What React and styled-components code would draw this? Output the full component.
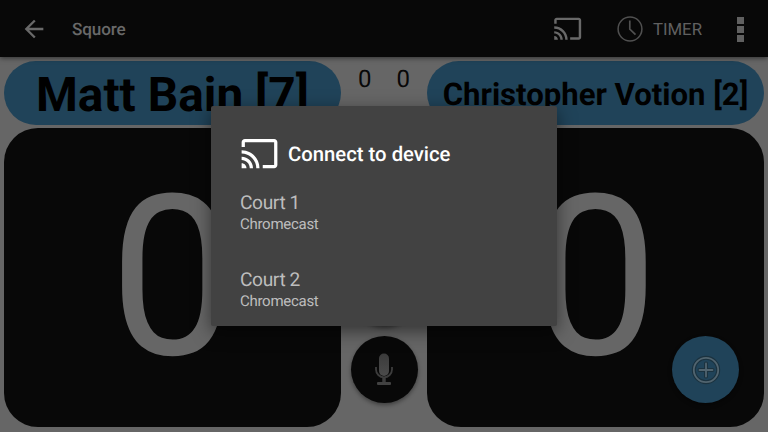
import React from "react";
import styled, { createGlobalStyle } from "styled-components";

const GlobalStyle = createGlobalStyle`
  *, *::before, *::after { box-sizing: border-box; }
  html, body { margin: 0; padding: 0; overflow: hidden; background: #666; }
  svg { display: block; flex: none; }
`;

const Screen = styled.div`
  position: relative;
  display: flex;
  flex-direction: column;
  width: 768px;
  height: 432px;
  overflow: hidden;
  background: #666;
  font-family: Roboto, "Liberation Sans", sans-serif;
  text-rendering: geometricPrecision;
`;

const AppBar = styled.header`
  position: relative;
  display: flex;
  align-items: center;
  flex: none;
  height: 57px;
  padding: 1px 24.5px 0 19.5px;
  background: #080808;
  color: #696969;
  box-shadow: 0 1px 5px rgba(0, 0, 0, 0.55);
`;

const AppTitle = styled.h1`
  flex: 1;
  margin: 0 0 0 24.5px;
  padding-top: 2px;
  font-size: 17.1px;
  line-height: 20px;
  font-weight: 500;
  letter-spacing: -0.1px;
`;

const TimerAction = styled.div`
  display: flex;
  align-items: center;
  gap: 10px;
  margin: 0 34.5px 0 35px;
  font-size: 16.8px;
  line-height: 20px;
  color: #606060;
`;

const TimerLabel = styled.span`
  padding-top: 2px;
`;

const OverflowMenu = styled.div`
  display: grid;
  gap: 2px;
`;

const OverflowDot = styled.span`
  width: 7px;
  height: 7px;
  background: #606060;
`;

const Board = styled.main`
  display: grid;
  grid-template-columns: 337px 86px 337px;
  flex: 1;
  padding: 4px 4px 5px;
`;

const Side = styled.section`
  display: flex;
  flex-direction: column;
  gap: 3px;
`;

const PlayerName = styled.div`
  display: flex;
  align-items: center;
  justify-content: center;
  height: 64px;
  padding-top: ${(p) => p.$drop}px;
  border-radius: 32px;
  background: #204359;
  color: #000;
  font-size: ${(p) => p.$size}px;
  font-weight: 700;
  line-height: 1;
  white-space: nowrap;
`;

const ScorePanel = styled.div`
  display: flex;
  align-items: center;
  justify-content: center;
  flex: 1;
  border-radius: 34px;
  background: #080808;
  color: #666;
  font-size: 224px;
  line-height: 1;
`;

const Middle = styled.div`
  display: flex;
  flex-direction: column;
  align-items: center;
  justify-content: space-between;
  padding: 4px 0 24px;
`;

const Games = styled.div`
  display: flex;
  gap: 25px;
  color: #080808;
  font-size: 24px;
  line-height: 28px;
`;

const FabStack = styled.div`
  display: grid;
  gap: 10px;
`;

const Fab = styled.button`
  display: flex;
  align-items: center;
  justify-content: center;
  width: 67px;
  height: 67px;
  padding: 0;
  border: 0;
  border-radius: 50%;
  background: ${(p) => (p.$accent ? "#204359" : "#080808")};
  box-shadow: 0 2px 4px rgba(0, 0, 0, 0.4);
`;

const FloatingCorner = styled.div`
  position: absolute;
  right: 29px;
  bottom: 29px;
`;

const Dialog = styled.div`
  position: absolute;
  left: 211px;
  top: 106px;
  width: 346px;
  height: 220px;
  padding: 28px 28px 0 29px;
  border-radius: 2px;
  background: #424242;
  box-shadow: 0 5px 18px rgba(0, 0, 0, 0.5);
`;

const DialogHeader = styled.div`
  display: flex;
  align-items: center;
  gap: 9px;
  height: 39px;
  color: #fff;
`;

const DialogTitle = styled.h2`
  margin: 0;
  padding-top: 1px;
  font-size: 20.3px;
  line-height: 24px;
  font-weight: 500;
`;

const DeviceList = styled.ul`
  display: grid;
  gap: 34px;
  margin: 18px 0 0;
  padding: 0;
  list-style: none;
  color: #bdbdbd;
`;

const DeviceName = styled.div`
  font-size: 19.2px;
  line-height: 23px;
  letter-spacing: -0.4px;
`;

const DeviceKind = styled.div`
  padding-top: 1px;
  font-size: 15px;
  line-height: 19px;
  letter-spacing: -0.28px;
`;

const CastIcon = ({ size }) => (
  <svg width={size} height={size} viewBox="0 0 24 24" fill="currentColor">
    <path d="M21 3H3c-1.1 0-2 .9-2 2v3h2V5h18v14h-7v2h7c1.1 0 2-.9 2-2V5c0-1.1-.9-2-2-2zM1 18v3h3c0-1.66-1.34-3-3-3zm0-4v2c2.76 0 5 2.24 5 5h2c0-3.87-3.13-7-7-7zm0-4v2c4.97 0 9 4.03 9 9h2c0-6.08-4.93-11-11-11z" />
  </svg>
);

const BackIcon = () => (
  <svg width="28" height="28" viewBox="0 0 24 24" fill="currentColor">
    <path d="M20 11H7.83l5.59-5.59L12 4l-8 8 8 8 1.41-1.41L7.83 13H20z" />
  </svg>
);

const ClockIcon = () => (
  <svg width="26" height="26" viewBox="0 0 26 26" fill="none" stroke="#505050">
    <circle cx="13" cy="13" r="11.9" strokeWidth="1.5" />
    <path d="M12.8 4.5V13.2L18.5 18.7" strokeWidth="1.7" />
  </svg>
);

const MicIcon = () => (
  <svg width="20" height="34" viewBox="0 0 20 34">
    <defs>
      <linearGradient id="metal" x1="0" y1="0" x2="0" y2="1">
        <stop offset="0" stopColor="#3b3b3b" />
        <stop offset="1" stopColor="#4b4b4b" />
      </linearGradient>
    </defs>
    <rect x="5" y="0.5" width="10" height="22.5" rx="5" fill="url(#metal)" />
    <path d="M2 14v2.5a8 7.8 0 0 0 16 0V14" fill="none" stroke="#3d3d3d" strokeWidth="1.8" />
    <path d="M10 24v5" stroke="#3d3d3d" strokeWidth="3.5" />
    <rect x="3" y="29" width="14" height="3" rx="1" fill="#424242" />
  </svg>
);

const PlusIcon = () => (
  <svg width="30" height="30" viewBox="0 0 30 30" fill="none" strokeLinecap="round">
    <g stroke="#1b323f" strokeWidth="4">
      <circle cx="15" cy="15" r="12.2" />
      <path d="M15 8.5v13M8.5 15h13" />
    </g>
    <g stroke="#51646f" strokeWidth="1.8">
      <circle cx="15" cy="15" r="12.2" />
      <path d="M15 8.5v13M8.5 15h13" />
    </g>
  </svg>
);

const players = [
  { name: "Matt Bain [7]", size: 47.8, drop: 6, score: 0 },
  { name: "Christopher Votion [2]", size: 31.1, drop: 4, score: 0 },
];

const devices = [
  { name: "Court 1", kind: "Chromecast" },
  { name: "Court 2", kind: "Chromecast" },
];

const PlayerSide = ({ player }) => (
  <Side>
    <PlayerName $size={player.size} $drop={player.drop}>{player.name}</PlayerName>
    <ScorePanel>{player.score}</ScorePanel>
  </Side>
);

export default function App() {
  return (
    <Screen>
      <GlobalStyle />
      <AppBar>
        <BackIcon />
        <AppTitle>Squore</AppTitle>
        <CastIcon size={29.4} />
        <TimerAction>
          <ClockIcon />
          <TimerLabel>TIMER</TimerLabel>
        </TimerAction>
        <OverflowMenu>
          <OverflowDot />
          <OverflowDot />
          <OverflowDot />
        </OverflowMenu>
      </AppBar>
      <Board>
        <PlayerSide player={players[0]} />
        <Middle>
          <Games>
            <span>0</span>
            <span>0</span>
          </Games>
          <FabStack>
            <Fab />
            <Fab>
              <MicIcon />
            </Fab>
          </FabStack>
        </Middle>
        <PlayerSide player={players[1]} />
      </Board>
      <FloatingCorner>
        <Fab $accent>
          <PlusIcon />
        </Fab>
      </FloatingCorner>
      <Dialog>
        <DialogHeader>
          <CastIcon size={39} />
          <DialogTitle>Connect to device</DialogTitle>
        </DialogHeader>
        <DeviceList>
          {devices.map((d) => (
            <li key={d.name}>
              <DeviceName>{d.name}</DeviceName>
              <DeviceKind>{d.kind}</DeviceKind>
            </li>
          ))}
        </DeviceList>
      </Dialog>
    </Screen>
  );
}
